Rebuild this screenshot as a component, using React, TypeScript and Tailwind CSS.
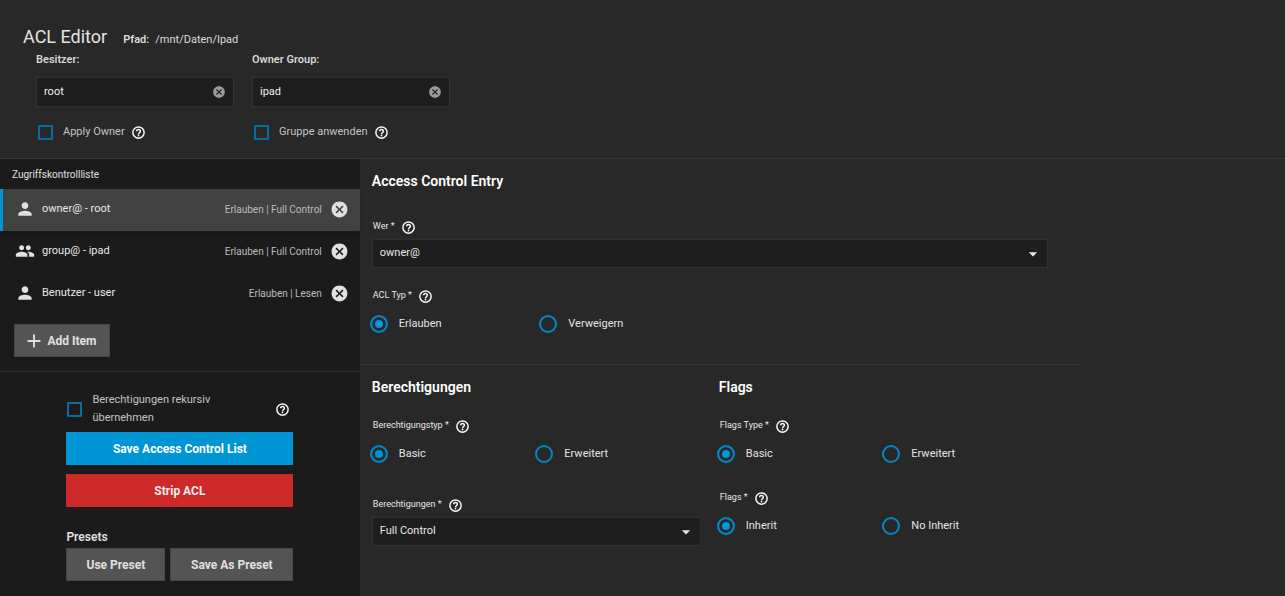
import { useState } from 'react';
import { MdAdd, MdArrowDropDown, MdCancel, MdPeople, MdPerson } from 'react-icons/md';

const entries = [
  { id: 'owner', icon: MdPerson, name: 'owner@ - root', access: 'Erlauben | Full Control' },
  { id: 'group', icon: MdPeople, name: 'group@ - ipad', access: 'Erlauben | Full Control' },
  { id: 'user', icon: MdPerson, name: 'Benutzer - user', access: 'Erlauben | Lesen' },
];

function Help({ topic }: { topic: string }) {
  return (
    <button type="button" aria-label={`Hilfe: ${topic}`} className="shrink-0 text-[#f4f4f4]">
      <svg viewBox="0 0 24 24" className="size-[15px]" fill="none" stroke="currentColor" strokeWidth="2.4">
        <circle cx="12" cy="12" r="9" />
        <path d="M9 10a3 3 0 1 1 6 0c0 2-3 2.2-3 5" />
        <path d="M12 16v2.2" />
      </svg>
    </button>
  );
}

function Checkbox({ id, label, className = '' }: { id: string; label: string; className?: string }) {
  return (
    <div className={`flex items-center gap-2.5 ${className}`}>
      <input
        id={id}
        type="checkbox"
        className="size-[15px] shrink-0 appearance-none rounded-[1px] border-2 border-[#086d9c] checked:bg-[#0095d5]"
      />
      <label htmlFor={id} className="text-[#c4c4c4]">
        {label}
      </label>
    </div>
  );
}

function OwnerField({ id, label, value, apply }: { id: string; label: string; value: string; apply: string }) {
  const [text, setText] = useState(value);

  return (
    <div className="w-[198px]">
      <label htmlFor={id} className="block h-5 font-semibold leading-5 text-[#d6d6d6]">
        {label}
      </label>
      <div className="mt-[7px] flex h-[30px] items-center border border-[#303030] bg-[#1e1e1e] px-[7px]">
        <input
          id={id}
          type="text"
          value={text}
          onChange={(e) => setText(e.target.value)}
          className="min-w-0 flex-1 bg-transparent text-[#f0f0f0] outline-none"
        />
        <button type="button" aria-label="Leeren" onClick={() => setText('')} className="text-[#9a9a9a]">
          <MdCancel size={14} />
        </button>
      </div>
      <div className="mt-[15px] flex h-5 items-center gap-1.5 pl-0.5">
        <Checkbox id={`${id}-apply`} label={apply} />
        <Help topic={apply} />
      </div>
    </div>
  );
}

function FieldLabel({ id, htmlFor, text, className = '' }: { id?: string; htmlFor?: string; text: string; className?: string }) {
  return (
    <div className={`flex h-5 items-center gap-1.5 pl-[3px] text-[9px] text-[#e8e8e8] ${className}`}>
      {htmlFor ? <label htmlFor={htmlFor}>{text} *</label> : <span id={id}>{text} *</span>}
      <Help topic={text} />
    </div>
  );
}

function RadioGroup({ name, options, className }: { name: string; options: string[]; className: string }) {
  return (
    <div role="radiogroup" aria-labelledby={name} className={`mt-2 grid h-5 items-center ${className}`}>
      {options.map((option, i) => (
        <label key={option} className="flex items-center gap-[11px] text-[#e4e4e4]">
          <input
            type="radio"
            name={name}
            defaultChecked={i === 0}
            className="size-[18px] shrink-0 appearance-none rounded-full border-2 border-[#0088c6] checked:bg-[#0095d5] checked:shadow-[inset_0_0_0_3px_#282828]"
          />
          {option}
        </label>
      ))}
    </div>
  );
}

function Select({ id, options }: { id: string; options: string[] }) {
  return (
    <div className="relative ml-0.5 mt-0.5">
      <select
        id={id}
        className="h-[29px] w-full appearance-none border border-[#303030] bg-[#1e1e1e] pl-[7px] text-[#e8e8e8] outline-none"
      >
        {options.map((option) => (
          <option key={option}>{option}</option>
        ))}
      </select>
      <MdArrowDropDown size={20} className="pointer-events-none absolute right-[5px] top-[5px] text-[#e8e8e8]" />
    </div>
  );
}

function Heading({ children }: { children: string }) {
  return <h2 className="h-5 pl-0.5 text-sm font-semibold leading-5 text-white">{children}</h2>;
}

export default function App() {
  const [selected, setSelected] = useState('owner');

  return (
    <div className="flex min-h-screen flex-col bg-[#282828] font-[Roboto,sans-serif] text-[11px] text-[#e8e8e8]">
      <header className="border-b border-[#353535] pb-4 pt-[25px]">
        <div className="flex h-[25px] items-baseline gap-4 pl-[23px]">
          <h1 className="text-lg leading-6 text-[#e4e4e4]">ACL Editor</h1>
          <p className="flex gap-1.5 text-[#dcdcdc]">
            <strong className="font-semibold">Pfad:</strong>
            <span>/mnt/Daten/Ipad</span>
          </p>
        </div>
        <div className="flex flex-wrap gap-[18px] pl-9">
          <OwnerField id="owner" label="Besitzer:" value="root" apply="Apply Owner" />
          <OwnerField id="owner-group" label="Owner Group:" value="ipad" apply="Gruppe anwenden" />
        </div>
      </header>

      <div className="flex flex-1">
        {/* Entry list and actions */}
        <aside className="w-[28%] shrink-0 bg-[#1b1b1b]">
          <section className="border-b border-[#303030] pb-3.5">
            <h2 className="h-[30px] pl-3 text-[10px] leading-8 text-[#e0e0e0]">Zugriffskontrollliste</h2>
            <ul>
              {entries.map(({ id, icon: Icon, name, access }) => (
                <li
                  key={id}
                  className={`flex h-[42px] items-center border-l-[3px] pb-0.5 pr-[11px] ${
                    id === selected ? 'border-[#0095d5] bg-[#424242] shadow-md' : 'border-transparent'
                  }`}
                >
                  <button type="button" onClick={() => setSelected(id)} className="flex flex-1 items-center text-left">
                    <span className="flex w-[39px] justify-center pl-1">
                      <Icon size={20} className="text-[#e0e0e0]" />
                    </span>
                    <span className="flex-1">{name}</span>
                    <span className="text-[10px] text-[#bcbcbc]">{access}</span>
                  </button>
                  <button type="button" aria-label={`${name} entfernen`} className="ml-2 text-[#e0e0e0]">
                    <MdCancel size={19} />
                  </button>
                </li>
              ))}
            </ul>
            <button
              type="button"
              className="ml-3.5 mt-[9px] flex h-[33px] w-24 items-center justify-center gap-0.5 border border-[#484848] bg-[#545454] pr-1 text-xs font-bold text-[#e0e0e0]"
            >
              <MdAdd size={22} />
              Add Item
            </button>
          </section>

          <section className="mx-auto w-[227px] pb-[15px] pt-[19px]">
            <div className="flex items-center justify-between pr-[3px]">
              <Checkbox id="recursive" label="Berechtigungen rekursiv übernehmen" className="w-40 pl-px leading-[18px]" />
              <Help topic="Berechtigungen rekursiv übernehmen" />
            </div>
            <div className="mt-[5px] flex flex-col gap-[9px] text-xs font-bold">
              <button type="button" className="h-[33px] bg-[#0095d5] text-white">
                Save Access Control List
              </button>
              <button type="button" className="h-[33px] bg-[#ce2929] text-[#ececec]">
                Strip ACL
              </button>
            </div>
            <h2 className="mt-5 h-5 text-xs font-semibold leading-5 text-[#e0e0e0]">Presets</h2>
            <div className="mt-px flex gap-[5px] text-xs font-bold text-[#e0e0e0]">
              <button type="button" className="h-[33px] w-[99px] border border-[#484848] bg-[#545454]">
                Use Preset
              </button>
              <button type="button" className="h-[33px] flex-1 border border-[#484848] bg-[#545454]">
                Save As Preset
              </button>
            </div>
          </section>
        </aside>

        {/* Entry form */}
        <main className="min-w-0 max-w-[720px] flex-1">
          <section className="border-b border-[#353535] pb-[30px] pl-2.5 pr-8 pt-3">
            <Heading>Access Control Entry</Heading>
            <FieldLabel htmlFor="who" text="Wer" className="mt-[26px]" />
            <Select id="who" options={['owner@', 'group@', 'everyone@']} />
            <FieldLabel id="acl-type" text="ACL Typ" className="mt-[18px]" />
            <RadioGroup name="acl-type" options={['Erlauben', 'Verweigern']} className="grid-cols-4" />
          </section>

          <div className="grid grid-cols-2 pl-2.5 pr-4 pt-3">
            <section className="pr-4">
              <Heading>Berechtigungen</Heading>
              <FieldLabel id="perm-type" text="Berechtigungstyp" className="mt-[19px]" />
              <RadioGroup name="perm-type" options={['Basic', 'Erweitert']} className="grid-cols-2" />
              <FieldLabel htmlFor="perms" text="Berechtigungen" className="mt-[31px]" />
              <Select id="perms" options={['Full Control', 'Modify', 'Read', 'Traverse']} />
            </section>
            <section className="pr-4">
              <Heading>Flags</Heading>
              <FieldLabel id="flags-type" text="Flags Type" className="mt-[19px]" />
              <RadioGroup name="flags-type" options={['Basic', 'Erweitert']} className="grid-cols-2" />
              <FieldLabel id="flags" text="Flags" className="mt-6" />
              <RadioGroup name="flags" options={['Inherit', 'No Inherit']} className="grid-cols-2" />
            </section>
          </div>
        </main>
      </div>
    </div>
  );
}
